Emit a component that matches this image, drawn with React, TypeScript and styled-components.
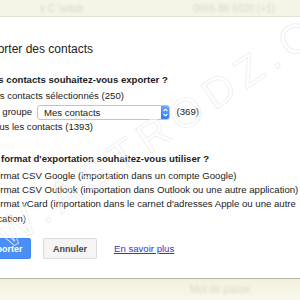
import React from "react";
import styled, { createGlobalStyle } from "styled-components";

const GlobalStyle = createGlobalStyle`
  html, body {
    margin: 0;
    padding: 0;
  }
  body {
    font-family: "Liberation Sans", Arial, sans-serif;
    color: #222;
  }
`;

const contactChoices = [
  { id: "selected", label: "Les contacts sélectionnés (250)" },
  { id: "group", label: "Le groupe", group: "Mes contacts", count: "(369)", checked: true },
  { id: "all", label: "Tous les contacts (1393)" },
];

const formatChoices = [
  { id: "google", label: "Format CSV Google (importation dans un compte Google)", checked: true },
  { id: "outlook", label: "Format CSV Outlook (importation dans Outlook ou une autre application)" },
  {
    id: "vcard",
    label: "Format vCard (importation dans le carnet d'adresses Apple ou une autre application)",
  },
];

const SelectArrows = () => (
  <svg width="9" height="15" viewBox="0 0 9 15">
    <path d="M2.6 6 L4.5 4.2 L6.4 6" fill="none" stroke="#fff" strokeWidth="1.1" />
    <path d="M2.6 9 L4.5 10.8 L6.4 9" fill="none" stroke="#fff" strokeWidth="1.1" />
  </svg>
);

export default function App() {
  return (
    <>
      <GlobalStyle />
      <Page>
        <TopBar>
          <Blurred>x C 'wdsb</Blurred>
          <Blurred $push>0655 88 5920 (+1)</Blurred>
        </TopBar>

        <Dialog>
          <Title>Exporter des contacts</Title>

          <Question>Quels contacts souhaitez-vous exporter ?</Question>
          <Options>
            {contactChoices.map((c) => (
              <Option key={c.id} $tall={!!c.group}>
                <Radio $checked={!!c.checked} />
                {c.label}
                {c.group && (
                  <>
                    {" "}
                    <Select>
                      <SelectText>{c.group}</SelectText>
                      <SelectButton>
                        <SelectArrows />
                      </SelectButton>
                    </Select>{" "}
                    {c.count}
                  </>
                )}
              </Option>
            ))}
          </Options>

          <Question $spaced>Quel format d'exportation souhaitez-vous utiliser ?</Question>
          <Options>
            {formatChoices.map((f) => (
              <Option key={f.id}>
                <Radio $checked={!!f.checked} />
                {f.label}
              </Option>
            ))}
          </Options>

          <Actions>
            <PrimaryButton>Exporter</PrimaryButton>
            <Button>Annuler</Button>
            <HelpLink href="#">En savoir plus</HelpLink>
          </Actions>
        </Dialog>

        <Footer>
          <Blurred>Mot de passe</Blurred>
        </Footer>

        <Watermark>WWW.ASTRODZ.COM</Watermark>
      </Page>
    </>
  );
}

const Page = styled.div`
  position: relative;
  width: 300px;
  height: 300px;
  overflow: hidden;
  display: flex;
  flex-direction: column;
  background: #f7f6e6;
`;

const TopBar = styled.div`
  height: 16px;
  flex-shrink: 0;
  display: flex;
  align-items: center;
  padding: 0 25px 0 40px;
  background: #f5f4e6;
  border-bottom: 1px solid #e2e1d6;
`;

const Blurred = styled.span<{ $push?: boolean }>`
  margin-left: ${(p) => (p.$push ? "auto" : "0")};
  font-size: 10px;
  color: #d9d8cc;
  filter: blur(1px);
  white-space: nowrap;
`;

const Dialog = styled.div`
  flex-shrink: 0;
  box-sizing: border-box;
  height: 262px;
  width: 383px;
  margin-left: -43px;
  padding: 24px 20px 0;
  background: #fff;
  border-bottom: 1px solid #b5b4aa;
  font-size: 9.6px;
`;

const Title = styled.h1`
  margin: 0 0 16px;
  font-size: 12px;
  line-height: 16px;
  font-weight: normal;
  color: #222;
`;

const Question = styled.h2<{ $spaced?: boolean }>`
  margin: ${(p) => (p.$spaced ? "18px" : "0")} 0 2px;
  font-size: 9.6px;
  line-height: 14.4px;
  font-weight: bold;
  color: #222;
`;

const Options = styled.div`
  display: flex;
  flex-direction: column;
`;

const Option = styled.div<{ $tall?: boolean }>`
  line-height: ${(p) => (p.$tall ? "15.6px" : "14.4px")};
  white-space: normal;
`;

const Radio = styled.span<{ $checked: boolean }>`
  display: inline-block;
  box-sizing: border-box;
  width: 9px;
  height: 9px;
  margin-right: 3px;
  vertical-align: -1px;
  border-radius: 50%;
  border: 1px solid #999;
  background: ${(p) => (p.$checked ? "radial-gradient(circle, #333 30%, #fff 40%)" : "#fff")};
`;

const Select = styled.span`
  display: inline-flex;
  align-items: stretch;
  box-sizing: border-box;
  width: 133px;
  height: 15px;
  margin: 0 4px 0 2px;
  vertical-align: middle;
  border: 1px solid #c4c4c4;
  border-radius: 3px;
  background: #fff;
  overflow: hidden;
`;

const SelectText = styled.span`
  flex: 1;
  padding-left: 6px;
  line-height: 13px;
  color: #222;
`;

const SelectButton = styled.span`
  width: 9px;
  display: flex;
  align-items: center;
  justify-content: center;
  margin: -1px -1px -1px 0;
  background: linear-gradient(#6fa9f8, #2f79ea);
  border-radius: 0 3px 3px 0;
`;

const Actions = styled.div`
  display: flex;
  align-items: center;
  gap: 12px;
  margin-top: 12px;
`;

const Button = styled.button`
  box-sizing: border-box;
  width: 54px;
  height: 21px;
  padding: 0;
  border: 1px solid #dcdcdc;
  border-radius: 2px;
  background: #f5f5f5;
  color: #444;
  font-family: inherit;
  font-size: 9px;
  font-weight: bold;
`;

const PrimaryButton = styled(Button)`
  border-color: #3f86ef;
  background: #4b8ef5;
  color: #fff;
`;

const HelpLink = styled.a`
  margin-left: 5px;
  font-size: 9.6px;
  color: #3636cf;
  text-decoration: underline;
`;

const Footer = styled.div`
  flex: 1;
  display: flex;
  align-items: center;
  padding-left: 190px;
  background: linear-gradient(#f2f1dc, #f8f8ec);
`;

const Watermark = styled.div`
  position: absolute;
  left: 152px;
  top: 136px;
  transform: translate(-50%, -50%) rotate(-34deg);
  font-size: 42px;
  letter-spacing: 8px;
  white-space: nowrap;
  color: transparent;
  -webkit-text-stroke: 0.7px #ececec;
  pointer-events: none;
`;
